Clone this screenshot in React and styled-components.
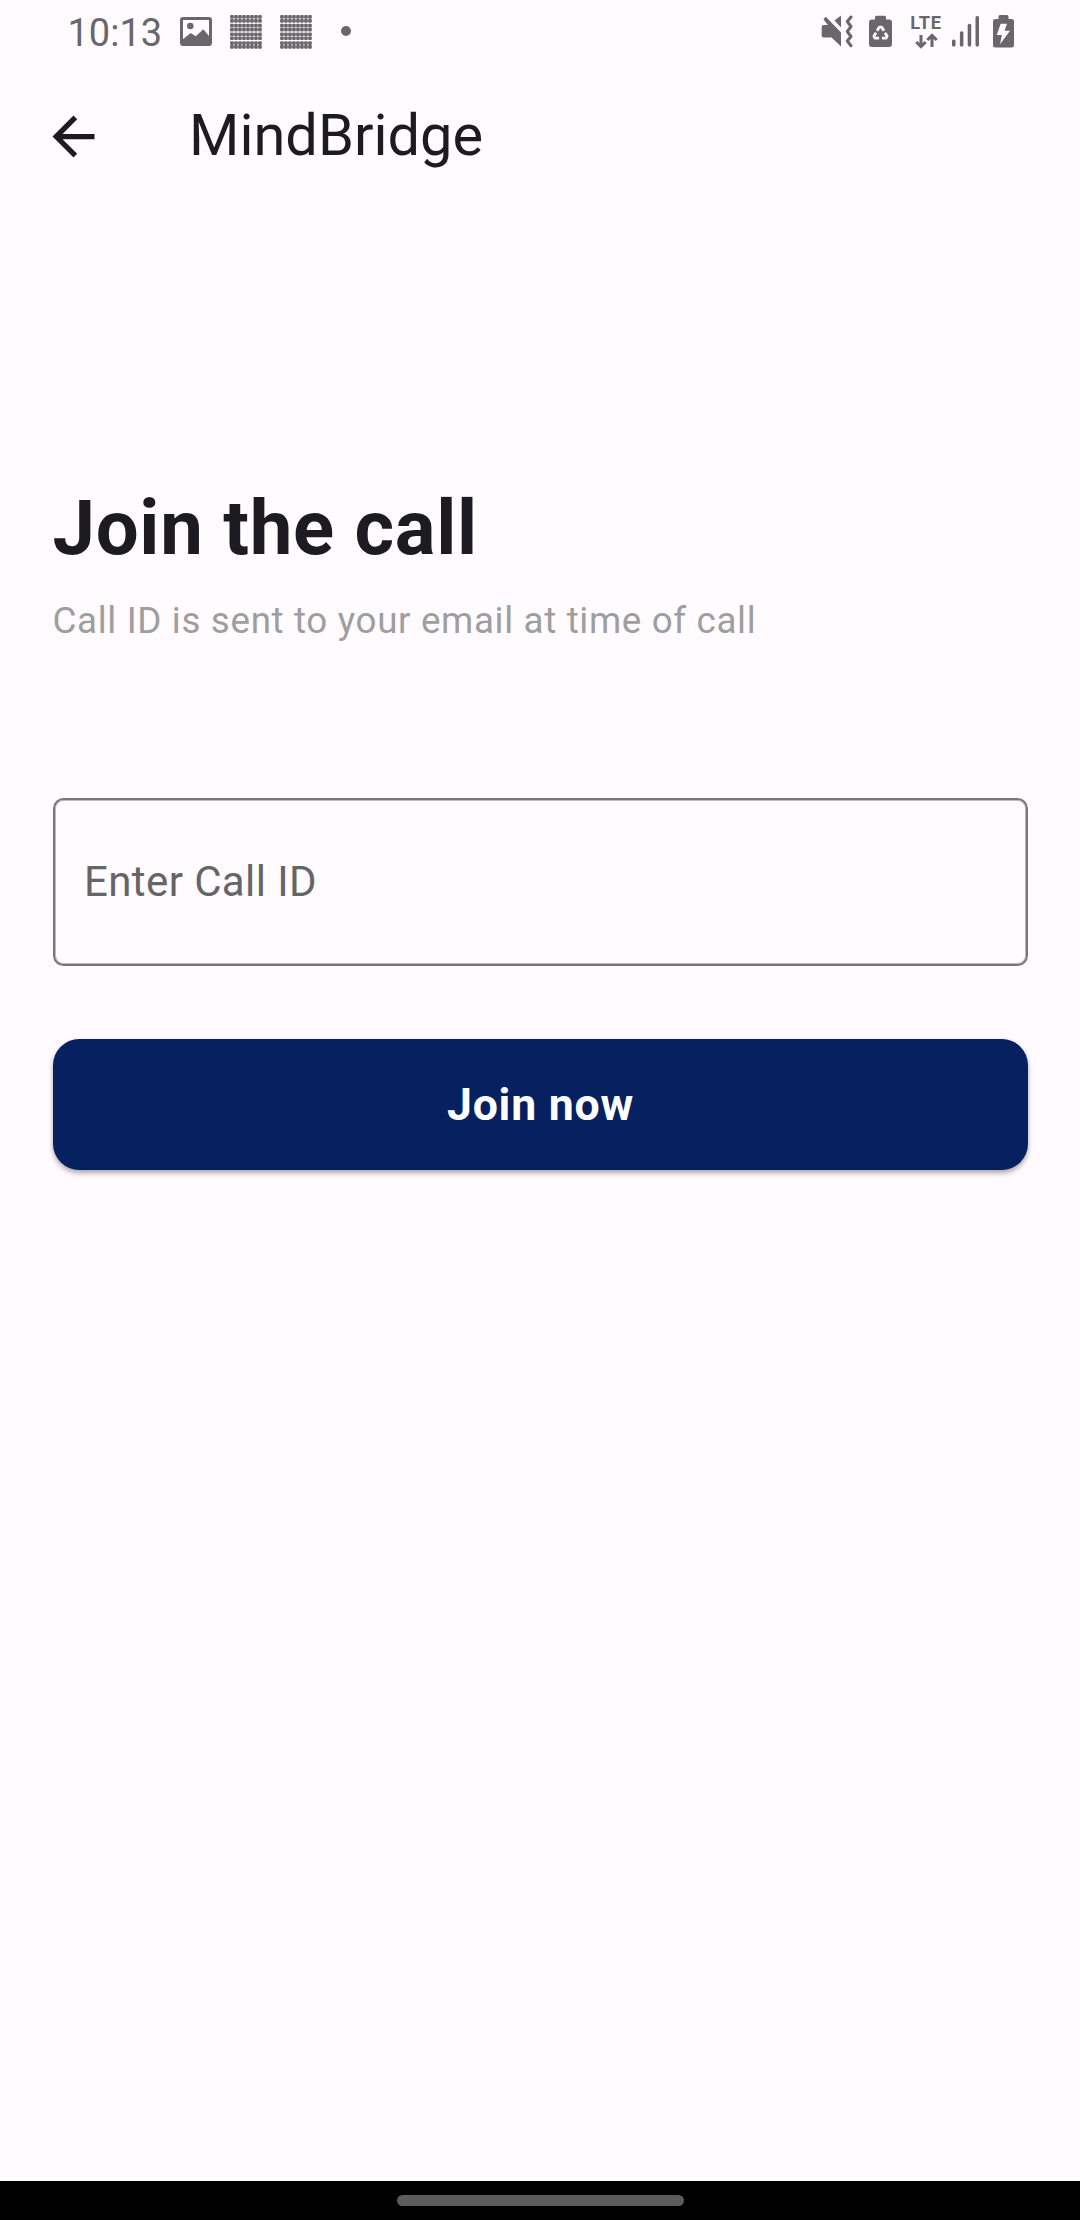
import React from "react";
import styled, { createGlobalStyle } from "styled-components";

const GlobalStyle = createGlobalStyle`
  * { box-sizing: border-box; }
  html, body { margin: 0; padding: 0; background: #fffbff; }
  body { font-family: Roboto, "Noto Sans", sans-serif; }
`;

const Screen = styled.div`
  width: 1080px;
  height: 2220px;
  display: flex;
  flex-direction: column;
  background: #fffbff;
  color: #1c1b1f;
  overflow: hidden;
`;

const StatusBar = styled.header`
  height: 63px;
  flex: none;
  display: flex;
  justify-content: space-between;
  padding: 0 66px 0 67.5px;
  color: #69676b;
`;

const StatusGroup = styled.div`
  display: flex;
  align-items: flex-start;
`;

const Clock = styled.span`
  width: 112.5px;
  font-size: 38px;
  line-height: 46px;
  padding-top: 10px;
`;

const StatusIcon = styled.svg`
  display: block;
  flex: none;
  height: 64px;
  width: ${(p) => p.$width}px;
  margin-left: ${(p) => p.$gap || 0}px;
  fill: currentColor;
`;

const Network = styled.div`
  display: flex;
  flex-direction: column;
  align-items: center;
  width: 30px;
  margin-left: 19px;
  padding-top: 14px;
`;

const NetworkLabel = styled.span`
  height: 18px;
  font-size: 18.3px;
  font-weight: 700;
  line-height: 18px;
  letter-spacing: 0.6px;
`;

const Arrows = styled.svg`
  display: block;
  margin-top: 1px;
  fill: none;
  stroke: currentColor;
  stroke-width: 3;
`;

const AppBar = styled.div`
  height: 147px;
  flex: none;
  display: flex;
  align-items: center;
  padding-left: 42px;
`;

const BackButton = styled.button`
  width: 63px;
  height: 63px;
  padding: 0;
  border: 0;
  background: none;
  color: inherit;
  svg { display: block; fill: currentColor; }
`;

const Title = styled.h1`
  margin: -4px 0 0 84px;
  font-size: 57.75px;
  font-weight: 400;
  line-height: 74px;
`;

const Content = styled.main`
  flex: 1;
  display: flex;
  flex-direction: column;
  padding: 274px 52.5px 0;
`;

const Heading = styled.h2`
  margin: 0;
  font-size: 76.125px;
  font-weight: 700;
  line-height: 88px;
  letter-spacing: 0.7px;
`;

const Hint = styled.p`
  margin: 27px 0 0;
  font-size: 36.75px;
  line-height: 44px;
  letter-spacing: 0.656px;
  color: #9e9e9e;
`;

const CallInput = styled.input`
  height: 168px;
  margin-top: 155px;
  padding: 0 29.5px 2px;
  border: 2px solid #79747e;
  border-radius: 10.5px;
  box-shadow: inset 0 0 0 1px #bdbac1;
  background: transparent;
  font: 400 42px/56px Roboto, "Noto Sans", sans-serif;
  letter-spacing: 0.4px;
  color: #1c1b1f;
  outline: none;
  &::placeholder { color: #666467; opacity: 1; }
`;

const JoinButton = styled.button`
  height: 131.25px;
  margin-top: 73px;
  padding: 1px 0 0 1px;
  border: 0;
  border-radius: 26.25px;
  background: #072060;
  color: #fff;
  font: 700 44.625px/56px Roboto, "Noto Sans", sans-serif;
  letter-spacing: 0.75px;
  box-shadow: 0 2px 5px rgba(0, 0, 0, 0.26), 0 5px 6px -1px rgba(0, 0, 0, 0.14);
`;

const NavBar = styled.footer`
  height: 39px;
  flex: none;
  display: flex;
  justify-content: center;
  padding-top: 14px;
  background: #000;
`;

const NavHandle = styled.div`
  width: 287px;
  height: 11px;
  border-radius: 6px;
  background: #5c5c5c;
`;

const cells = Array.from({ length: 8 }, (_, i) => i);

function DotGrid({ gap }) {
  return (
    <StatusIcon $width={32} $gap={gap} viewBox="0 0 32 64">
      {cells.map((row) =>
        cells.map((col) => (
          <rect
            key={`${row}-${col}`}
            x={col * 4 + 0.1}
            y={15.1 + Math.floor(row / 2) * 8.7 + (row % 2) * 3.9}
            width="3.700"
            height="3.700"
            rx="1"
          />
        ))
      )}
    </StatusIcon>
  );
}

function PictureIcon() {
  return (
    <StatusIcon $width={32} viewBox="0 0 32 64">
      <path
        fillRule="evenodd"
        d="M3 17h26q3 0 3 3v23q0 3-3 3H3q-3 0-3-3V20q0-3 3-3zm0 3v19.300l7.600-6.300 5.200 3.200 7.500-7L29 36V20z"
      />
      <circle cx="10.3" cy="26" r="3.300" />
    </StatusIcon>
  );
}

function MutedVibrateIcon() {
  return (
    <StatusIcon $width={32} viewBox="0 0 32 64">
      <path d="M.7 27q0-2 2-2h4.200L2.400 19.200 4.800 16.800 20 32.500V46.500L10.500 37.500H2.700q-2 0-2-2zM13.500 20.600L20 15.600v12z" />
      <path
        d="M30 17L26.300 21.500 30 26.500 26.300 31.500 30 36.500 26.300 41 30 45.700"
        fill="none"
        stroke="currentColor"
        strokeWidth="3"
        strokeLinecap="round"
        strokeLinejoin="round"
      />
    </StatusIcon>
  );
}

function RecycleBatteryIcon() {
  return (
    <StatusIcon $width={23} $gap={16} viewBox="0 0 23 64">
      <path d="M6 19.500v-2.300q0-1.500 1.500-1.500h8q1.500 0 1.500 1.500v2.300h3q3 0 3 3V44q0 3-3 3H3q-3 0-3-3V22.500q0-3 3-3z" />
      <g fill="none" stroke="#fffbff" strokeWidth="2.800" strokeLinejoin="round">
        <path d="M8 30.800l2.300-3.600h2.400l2.300 3.600M16 32.700l2.100 3.500-1 1.900h-4.200M7 32.700l-2.100 3.500 1 1.900h4.200" />
      </g>
    </StatusIcon>
  );
}

function SignalIcon() {
  return (
    <StatusIcon $width={27} $gap={11} viewBox="0 0 27 64">
      <rect x="0" y="39.500" width="3.500" height="7" rx="1.500" />
      <rect x="7.900" y="31.300" width="3.500" height="15.200" rx="1.500" />
      <rect x="15.700" y="23.700" width="3.500" height="22.800" rx="1.500" />
      <rect x="23.500" y="16" width="3.500" height="30.500" rx="1.500" />
    </StatusIcon>
  );
}

function ChargingBatteryIcon() {
  return (
    <StatusIcon $width={21} $gap={14} viewBox="0 0 21 64">
      <path
        fillRule="evenodd"
        d="M5.500 19v-2.500q0-1.500 1.500-1.500h7q1.500 0 1.500 1.500V19h3q2.500 0 2.500 2.500V45q0 2.500-2.500 2.500h-16Q0 47.500 0 45V21.500Q0 19 2.500 19zM7.700 23.700L3.700 35h5.200L7 44.200 17 30.700h-5.500l2.500-7z"
      />
    </StatusIcon>
  );
}

export default function App() {
  return (
    <>
      <GlobalStyle />
      <Screen>
        <StatusBar>
          <StatusGroup>
            <Clock>10:13</Clock>
            <PictureIcon />
            <DotGrid gap={18} />
            <DotGrid gap={18} />
            <StatusIcon $width={10} $gap={29} viewBox="0 0 10 64">
              <circle cx="5" cy="31" r="5" />
            </StatusIcon>
          </StatusGroup>
          <StatusGroup>
            <MutedVibrateIcon />
            <RecycleBatteryIcon />
            <Network>
              <NetworkLabel>LTE</NetworkLabel>
              <Arrows width="23" height="16" viewBox="0 0 23 16">
                <path d="M6 2v11M1.300 9L6 13.600 10.700 9M17 14V3M12.300 7L17 2.400 21.700 7" />
              </Arrows>
            </Network>
            <SignalIcon />
            <ChargingBatteryIcon />
          </StatusGroup>
        </StatusBar>
        <AppBar>
          <BackButton aria-label="Back">
            <svg width="63" height="63" viewBox="0 0 24 24">
              <path d="M20 11H7.830l5.590-5.590L12 4l-8 8 8 8 1.410-1.410L7.830 13H20v-2z" />
            </svg>
          </BackButton>
          <Title>MindBridge</Title>
        </AppBar>
        <Content>
          <Heading>Join the call</Heading>
          <Hint>Call ID is sent to your email at time of call</Hint>
          <CallInput placeholder="Enter Call ID" />
          <JoinButton>Join now</JoinButton>
        </Content>
        <NavBar>
          <NavHandle />
        </NavBar>
      </Screen>
    </>
  );
}
